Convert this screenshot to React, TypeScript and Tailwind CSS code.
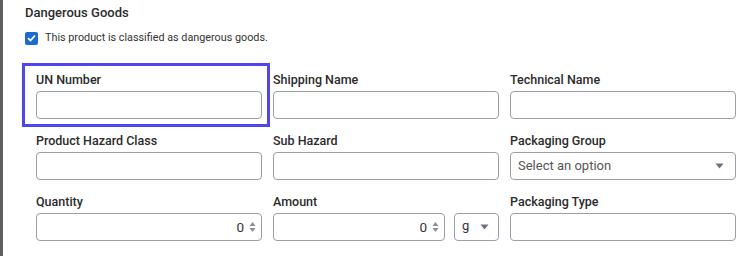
import React from "react";

function Label({ children }: { children: React.ReactNode }) {
  return (
    <div className="h-[22px] text-[12.5px] font-medium leading-[22px] text-[#2b2b2b]">
      {children}
    </div>
  );
}

function TextBox() {
  return <div className="h-[28px] rounded-[4px] border border-[#9aa0aa] bg-white" />;
}

function Spinner() {
  return (
    <svg width="7" height="12" viewBox="0 0 7 12" className="ml-[5px]">
      <path d="M3.5 1 L6.5 5 L0.5 5 Z" fill="#8a8f98" />
      <path d="M3.5 11 L6.5 7 L0.5 7 Z" fill="#8a8f98" />
    </svg>
  );
}

function Caret() {
  return (
    <svg width="9" height="6" viewBox="0 0 9 6">
      <path d="M0.5 0.5 L8.5 0.5 L4.5 5.5 Z" fill="#6b7280" />
    </svg>
  );
}

function NumberBox() {
  return (
    <div className="flex h-[28px] flex-1 items-center justify-end rounded-[4px] border border-[#9aa0aa] bg-white pr-[5px] text-[13.5px] text-[#333]">
      <span>0</span>
      <Spinner />
    </div>
  );
}

export default function App() {
  return (
    <div
      className="relative flex h-[256px] w-[748px] bg-white"
      style={{ fontFamily: "Roboto, 'Liberation Sans', sans-serif" }}
    >
      <div className="h-full w-[3px] bg-[#5f5f5f]" />
      <div className="flex-1 pl-[22px] pt-[4px]">
        <div className="text-[13px] font-medium leading-[18px] text-[#2b2b2b]">Dangerous Goods</div>
        <div className="mt-[9px] flex items-center gap-[7px]">
          <div className="flex h-[13px] w-[13px] items-center justify-center rounded-[2px] bg-[#1b6bd0]">
            <svg width="9" height="8" viewBox="0 0 9 8">
              <path d="M1 4.2 L3.5 6.5 L8 1.5" stroke="white" strokeWidth="1.8" fill="none" />
            </svg>
          </div>
          <span className="text-[10.8px] leading-[14px] text-[#333]">
            This product is classified as dangerous goods.
          </span>
        </div>
        <div className="relative mt-[24px] grid w-[700px] translate-x-[11px] grid-cols-3 gap-x-[11px] gap-y-[11px]">
          <div className="pointer-events-none absolute left-[-14px] top-[-6px] h-[64px] w-[248px] border-[3px] border-[#5046ee]" />
          <div>
            <Label>UN Number</Label>
            <TextBox />
          </div>
          <div>
            <Label>Shipping Name</Label>
            <TextBox />
          </div>
          <div>
            <Label>Technical Name</Label>
            <TextBox />
          </div>
          <div>
            <Label>Product Hazard Class</Label>
            <TextBox />
          </div>
          <div>
            <Label>Sub Hazard</Label>
            <TextBox />
          </div>
          <div>
            <Label>Packaging Group</Label>
            <div className="flex h-[28px] items-center justify-between rounded-[4px] border border-[#9aa0aa] bg-white pl-[7px] pr-[11px] text-[13px] text-[#555]">
              <span>Select an option</span>
              <Caret />
            </div>
          </div>
          <div>
            <Label>Quantity</Label>
            <div className="flex">
              <NumberBox />
            </div>
          </div>
          <div>
            <Label>Amount</Label>
            <div className="flex gap-[9px]">
              <NumberBox />
              <div className="flex h-[28px] w-[45px] items-center justify-between rounded-[4px] border border-[#9aa0aa] bg-white pl-[7px] pr-[9px] text-[13px] text-[#333]">
                <span className="-mt-[2px]">g</span>
                <Caret />
              </div>
            </div>
          </div>
          <div>
            <Label>Packaging Type</Label>
            <TextBox />
          </div>
        </div>
      </div>
    </div>
  );
}
